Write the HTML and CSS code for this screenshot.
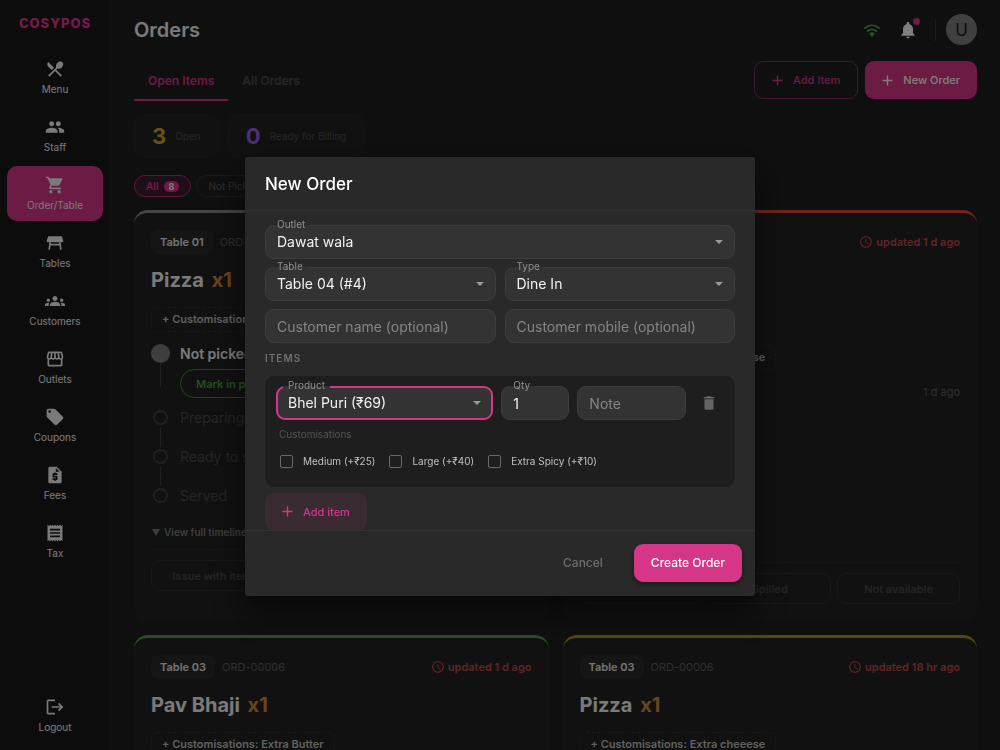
FILE: index.html
```html
<!DOCTYPE html>
<html lang="en">
<head>
<meta charset="utf-8">
<meta name="viewport" content="width=device-width, initial-scale=1">
<title>CosyPOS – Orders</title>
<link rel="stylesheet" href="styles.css">
</head>
<body>
<svg class="sprite" aria-hidden="true">
  <symbol id="i-add" viewBox="0 0 24 24"><path d="M19 13h-6v6h-2v-6H5v-2h6V5h2v6h6v2z"/></symbol>
  <symbol id="i-clock" viewBox="0 0 24 24"><path d="M11.99 2C6.47 2 2 6.48 2 12s4.47 10 9.99 10C17.52 22 22 17.52 22 12S17.52 2 11.99 2zM12 20c-4.42 0-8-3.58-8-8s3.58-8 8-8 8 3.58 8 8-3.58 8-8 8zm.5-13H11v6l5.25 3.15.75-1.23-4.5-2.67z"/></symbol>
</svg>

<div class="app">
  <aside class="sidebar">
    <div class="brand">COSYPOS</div>
    <nav class="nav">
      <a class="nav-item" href="#menu"><svg class="icon" viewBox="0 0 24 24"><path d="M8.1 13.34l2.83-2.83L3.91 3.5c-1.56 1.56-1.56 4.09 0 5.66l4.19 4.18zm6.78-1.81c1.53.71 3.68.21 5.27-1.38 1.91-1.91 2.28-4.65.81-6.12-1.46-1.46-4.2-1.1-6.12.81-1.59 1.59-2.09 3.74-1.38 5.27L3.7 19.87l1.41 1.41L12 14.41l6.88 6.88 1.41-1.41L13.41 13l1.47-1.47z"/></svg>Menu</a>
      <a class="nav-item" href="#staff"><svg class="icon" viewBox="0 0 24 24"><path d="M16 11c1.66 0 2.99-1.34 2.99-3S17.66 5 16 5c-1.66 0-3 1.34-3 3s1.34 3 3 3zm-8 0c1.66 0 2.99-1.34 2.99-3S9.66 5 8 5C6.34 5 5 6.34 5 8s1.34 3 3 3zm0 2c-2.33 0-7 1.17-7 3.5V19h14v-2.5c0-2.33-4.67-3.5-7-3.5zm8 0c-.29 0-.62.02-.97.05 1.16.84 1.97 1.97 1.97 3.45V19h6v-2.5c0-2.33-4.67-3.5-7-3.5z"/></svg>Staff</a>
      <a class="nav-item active" href="#orders"><svg class="icon" viewBox="0 0 24 24"><path d="M7 18c-1.1 0-1.99.9-1.99 2S5.9 22 7 22s2-.9 2-2-.9-2-2-2zM1 2v2h2l3.6 7.59-1.35 2.45c-.16.28-.25.61-.25.96 0 1.1.9 2 2 2h12v-2H7.42c-.14 0-.25-.11-.25-.25l.03-.12.9-1.63h7.45c.75 0 1.41-.41 1.75-1.03l3.58-6.49c.08-.14.12-.31.12-.48 0-.55-.45-1-1-1H5.21l-.94-2H1zm16 16c-1.1 0-1.99.9-1.99 2s.89 2 1.99 2 2-.9 2-2-.9-2-2-2z"/></svg>Order/Table</a>
      <a class="nav-item" href="#tables"><svg class="icon" viewBox="0 0 24 24"><path d="m21.96 9.73-1.43-5c-.12-.43-.51-.73-.96-.73H4.43c-.45 0-.84.3-.96.73l-1.43 5c-.18.63.3 1.27.96 1.27h2.2L4 20h2l.67-5h10.67l.66 5h2l-1.2-9H21c.66 0 1.14-.64.96-1.27zM6.93 13l.27-2h9.6l.27 2H6.93z"/></svg>Tables</a>
      <a class="nav-item" href="#customers"><svg class="icon" viewBox="0 0 24 24"><path d="M12 12.75c1.63 0 3.07.39 4.24.9 1.08.48 1.76 1.56 1.76 2.73V18H6v-1.61c0-1.18.68-2.26 1.76-2.73 1.17-.52 2.61-.91 4.24-.91zM4 13c1.1 0 2-.9 2-2s-.9-2-2-2-2 .9-2 2 .9 2 2 2zm1.13 1.1c-.37-.06-.74-.1-1.13-.1-.99 0-1.93.21-2.78.58C.48 14.9 0 15.62 0 16.43V18h4.5v-1.61c0-.83.23-1.61.63-2.29zM20 13c1.1 0 2-.9 2-2s-.9-2-2-2-2 .9-2 2 .9 2 2 2zm4 3.43c0-.81-.48-1.53-1.22-1.85-.85-.37-1.79-.58-2.78-.58-.39 0-.76.04-1.13.1.4.68.63 1.46.63 2.29V18H24v-1.57zM12 6c1.66 0 3 1.34 3 3s-1.34 3-3 3-3-1.34-3-3 1.34-3 3-3z"/></svg>Customers</a>
      <a class="nav-item" href="#outlets"><svg class="icon" viewBox="0 0 24 24"><path d="M21.9 8.89l-1.05-4.37c-.22-.9-1-1.52-1.91-1.52H5.05c-.9 0-1.69.63-1.9 1.52L2.1 8.89c-.24 1.02-.02 2.06.62 2.88.08.11.19.19.28.29V19c0 1.1.9 2 2 2h14c1.1 0 2-.9 2-2v-6.94c.09-.09.2-.18.28-.28.64-.82.87-1.87.62-2.89zM18.91 4.99l1.05 4.37c.1.42.01.84-.25 1.17-.14.18-.44.47-.94.47-.61 0-1.14-.49-1.21-1.14L16.98 5l1.93-.01zM13 5h1.96l.54 4.52c.05.39-.07.78-.33 1.07-.22.26-.54.41-.95.41-.67 0-1.22-.59-1.22-1.31V5zM8.49 9.52L9.04 5H11v4.69c0 .72-.55 1.31-1.29 1.31-.34 0-.65-.15-.89-.41-.25-.29-.37-.68-.33-1.07zM4.04 9.36L5.05 5h1.97l-.58 4.86c-.08.65-.6 1.14-1.21 1.14-.49 0-.8-.29-.93-.47-.27-.32-.36-.75-.26-1.17zM5 19v-6.03c.08.01.15.03.23.03.87 0 1.66-.36 2.24-.95.6.6 1.4.95 2.31.95.87 0 1.65-.36 2.23-.93.59.57 1.39.93 2.29.93.84 0 1.64-.35 2.24-.95.58.59 1.37.95 2.24.95.08 0 .15-.02.23-.03V19H5z"/></svg>Outlets</a>
      <a class="nav-item" href="#coupons"><svg class="icon" viewBox="0 0 24 24"><path d="M21.41 11.58l-9-9C12.05 2.22 11.55 2 11 2H4c-1.1 0-2 .9-2 2v7c0 .55.22 1.05.59 1.42l9 9c.36.36.86.58 1.41.58.55 0 1.05-.22 1.41-.59l7-7c.37-.36.59-.86.59-1.41 0-.55-.23-1.06-.59-1.42zM5.5 7C4.67 7 4 6.33 4 5.5S4.67 4 5.5 4 7 4.67 7 5.5 6.33 7 5.5 7z"/></svg>Coupons</a>
      <a class="nav-item" href="#fees"><svg class="icon" viewBox="0 0 24 24"><path d="M14 2H6c-1.1 0-1.99.9-1.99 2L4 20c0 1.1.89 2 1.99 2H18c1.1 0 2-.9 2-2V8l-6-6zm1 10h-4v1h3c.55 0 1 .45 1 1v3c0 .55-.45 1-1 1h-1v1h-2v-1H9v-2h4v-1h-3c-.55 0-1-.45-1-1v-3c0-.55.45-1 1-1h1V9h2v1h2v2zm-2-4V3.5L17.5 8H13z"/></svg>Fees</a>
      <a class="nav-item" href="#tax"><svg class="icon" viewBox="0 0 24 24"><path d="M18 17H6v-2h12v2zm0-4H6v-2h12v2zm0-4H6V7h12v2zM3 22l1.5-1.5L6 22l1.5-1.5L9 22l1.5-1.5L12 22l1.5-1.5L15 22l1.5-1.5L18 22l1.5-1.5L21 22V2l-1.5 1.5L18 2l-1.5 1.5L15 2l-1.5 1.5L12 2l-1.5 1.5L9 2 7.5 3.5 6 2 4.5 3.5 3 2v20z"/></svg>Tax</a>
      <a class="nav-item logout" href="#logout"><svg class="icon" viewBox="0 0 24 24"><path d="M17 7l-1.41 1.41L18.17 11H8v2h10.17l-2.58 2.58L17 17l5-5zM4 5h8V3H4c-1.1 0-2 .9-2 2v14c0 1.1.9 2 2 2h8v-2H4V5z"/></svg>Logout</a>
    </nav>
  </aside>

  <main class="main">
    <header class="topbar">
      <h1 class="page-title">Orders</h1>
      <svg class="wifi" viewBox="0 0 24 24" aria-label="Online"><path d="M2.500 9.500a14 14 0 0 1 19 0M6 13.500a9 9 0 0 1 12 0M9.500 17a4 4 0 0 1 5 0"/><circle cx="12" cy="18.500" r="2"/></svg>
      <button class="bell" type="button" aria-label="Notifications"><svg class="icon" viewBox="0 0 24 24"><path d="M12 22c1.1 0 2-.9 2-2h-4c0 1.1.89 2 2 2zm6-6v-5c0-3.070-1.640-5.640-4.500-6.320V4c0-.83-.67-1.500-1.500-1.500s-1.500.67-1.500 1.500v.68C7.630 5.360 6 7.920 6 11v5l-2 2v1h16v-1l-2-2z"/></svg><span class="bell-dot"></span></button>
      <span class="divider"></span>
      <button class="avatar" type="button">U</button>
    </header>

    <div class="toolbar">
      <div class="tabs">
        <button class="tab selected" type="button">Open Items</button>
        <button class="tab" type="button">All Orders</button>
      </div>
      <div class="actions">
        <button class="btn small outline" type="button"><svg class="icon" viewBox="0 0 24 24"><use href="#i-add"/></svg>Add Item</button>
        <button class="btn small primary" type="button"><svg class="icon" viewBox="0 0 24 24"><use href="#i-add"/></svg>New Order</button>
      </div>
    </div>

    <div class="stats">
      <div class="stat"><strong class="stat-num open">3</strong>Open</div>
      <div class="stat"><strong class="stat-num billing">0</strong>Ready for Billing</div>
    </div>

    <div class="filters">
      <button class="filter on" type="button">All <span class="count">8</span></button>
      <button class="filter" type="button">Not Picked</button>
    </div>

    <section class="cards">
      <article class="card grey">
        <div class="card-head"><span class="badge">Table 01</span><span class="ord">ORD-00008</span></div>
        <h2 class="dish">Pizza <span class="times">x1</span></h2>
        <div class="customs"><span class="custom">+ Customisations: Extra cheeese</span></div>
        <ol class="steps">
          <li class="step current"><span class="dot"></span><div class="step-body">Not picked<button class="mark" type="button">Mark in progress</button></div></li>
          <li class="step"><span class="dot"></span><div class="step-body">Preparing</div></li>
          <li class="step"><span class="dot"></span><div class="step-body">Ready to serve</div></li>
          <li class="step"><span class="dot"></span><div class="step-body">Served</div></li>
        </ol>
        <button class="timeline" type="button"><span class="tri"></span>View full timeline</button>
        <div class="issues"><button class="issue" type="button">Issue with item</button><button class="issue" type="button">Spilled</button><button class="issue" type="button">Not available</button></div>
      </article>

      <article class="card red">
        <div class="card-head"><span class="badge">Table 03</span><span class="updated"><svg class="icon" viewBox="0 0 24 24"><use href="#i-clock"/></svg>updated 1 d ago</span></div>
        <h2 class="dish">Pizza <span class="times">x1</span></h2>
        <div class="customs tall"><span class="custom">+ Customisations: Extra cheeese</span></div>
        <ol class="steps">
          <li class="step current"><span class="dot"></span><div class="step-body">Not picked</div><time class="ago">1 d ago</time></li>
          <li class="step"><span class="dot"></span><div class="step-body">Preparing</div></li>
          <li class="step"><span class="dot"></span><div class="step-body">Ready to serve</div></li>
          <li class="step"><span class="dot"></span><div class="step-body">Served</div></li>
        </ol>
        <button class="timeline" type="button"><span class="tri"></span>View full timeline</button>
        <div class="issues"><button class="issue" type="button">Issue with item</button><button class="issue" type="button">Spilled</button><button class="issue" type="button">Not available</button></div>
      </article>

      <article class="card green">
        <div class="card-head"><span class="badge">Table 03</span><span class="ord">ORD-00006</span><span class="updated"><svg class="icon" viewBox="0 0 24 24"><use href="#i-clock"/></svg>updated 1 d ago</span></div>
        <h2 class="dish">Pav Bhaji <span class="times">x1</span></h2>
        <div class="customs"><span class="custom">+ Customisations: Extra Butter</span></div>
      </article>

      <article class="card yellow">
        <div class="card-head"><span class="badge">Table 03</span><span class="ord">ORD-00006</span><span class="updated"><svg class="icon" viewBox="0 0 24 24"><use href="#i-clock"/></svg>updated 18 hr ago</span></div>
        <h2 class="dish">Pizza <span class="times">x1</span></h2>
        <div class="customs"><span class="custom">+ Customisations: Extra cheeese</span></div>
      </article>
    </section>
  </main>
</div>

<div class="backdrop">
  <form class="modal" role="dialog" aria-labelledby="dlg-title">
    <h2 class="modal-title" id="dlg-title">New Order</h2>
    <div class="modal-body">
      <div class="field select"><label for="outlet">Outlet</label><select id="outlet"><option>Dawat wala</option></select></div>
      <div class="pair">
        <div class="field select"><label for="table">Table</label><select id="table"><option>Table 04 (#4)</option></select></div>
        <div class="field select"><label for="type">Type</label><select id="type"><option>Dine In</option></select></div>
      </div>
      <div class="pair">
        <div class="field"><input type="text" aria-label="Customer name" placeholder="Customer name (optional)"></div>
        <div class="field"><input type="tel" aria-label="Customer mobile" placeholder="Customer mobile (optional)"></div>
      </div>
      <h3 class="items-title">ITEMS</h3>
      <div class="item-panel">
        <div class="item-row">
          <div class="field select focused"><label for="product">Product</label><select id="product"><option>Bhel Puri (₹69)</option></select></div>
          <div class="field"><label for="qty">Qty</label><input id="qty" type="text" inputmode="numeric" value="1"></div>
          <div class="field"><input type="text" aria-label="Note" placeholder="Note"></div>
          <button class="trash" type="button" aria-label="Remove item"><svg class="icon" viewBox="0 0 24 24"><path d="M6 19c0 1.1.9 2 2 2h8c1.1 0 2-.9 2-2V7H6v12zM19 4h-3.500l-1-1h-5l-1 1H5v2h14V4z"/></svg></button>
        </div>
        <div class="custom-title">Customisations</div>
        <div class="checks">
          <label class="check"><input type="checkbox">Medium (+₹25)</label>
          <label class="check"><input type="checkbox">Large (+₹40)</label>
          <label class="check"><input type="checkbox">Extra Spicy (+₹10)</label>
        </div>
      </div>
      <button class="btn small tint" type="button"><svg class="icon" viewBox="0 0 24 24"><use href="#i-add"/></svg>Add item</button>
    </div>
    <div class="modal-foot">
      <button class="btn text" type="button">Cancel</button>
      <button class="btn primary raised" type="submit">Create Order</button>
    </div>
  </form>
</div>
</body>
</html>
```
FILE: styles.css
```css
:root {
  --pink: #d63688;
  --bg: #1f1f1f;
  --panel: #222;
}
* { box-sizing: border-box; }
body {
  margin: 0;
  background: var(--bg);
  color: #fff;
  font-family: Inter, "Liberation Sans", sans-serif;
  font-size: 12px;
  line-height: 16px;
  overflow: hidden;
}
button, input, select { font: inherit; color: inherit; margin: 0; }
button { background: none; border: 0; padding: 0; cursor: pointer; white-space: nowrap; }
h1, h2, h3, ol { margin: 0; padding: 0; }
.sprite { display: none; }
.icon { display: block; flex: none; width: 20px; height: 20px; fill: currentColor; }

.app { display: flex; height: 100vh; overflow: hidden; }

/* Sidebar */
.sidebar {
  flex: none;
  width: 110px;
  display: flex;
  flex-direction: column;
  padding: 15px 7px 7px;
  background: #191919;
}
.brand {
  height: 35px;
  text-align: center;
  color: #e83892;
  font-size: 13px;
  font-weight: 800;
  letter-spacing: 1px;
}
.nav { flex: 1; display: flex; flex-direction: column; gap: 3px; }
.nav-item {
  height: 55px;
  display: flex;
  flex-direction: column;
  align-items: center;
  justify-content: center;
  gap: 2px;
  border-radius: 10px;
  color: #f4f4f4;
  font-size: 10px;
  text-decoration: none;
}
.nav-item.active { background: var(--pink); }
.logout { margin-top: auto; }

/* Main column */
.main { flex: 1; min-width: 0; padding: 14px 23px 0 24px; }
.topbar { display: flex; align-items: center; height: 31px; }
.page-title { flex: 1; font-size: 20px; line-height: 28px; font-weight: 600; color: #f4f4f4; }
.wifi { width: 18px; height: 18px; margin-right: 17px; fill: #4caf50; }
.wifi path { fill: none; stroke: #4caf50; stroke-width: 2; stroke-linecap: round; }
.bell { position: relative; margin-right: 17px; }
.bell-dot { position: absolute; top: -2px; right: -2px; width: 7px; height: 7px; border-radius: 50%; background: var(--pink); }
.divider { width: 1px; height: 22px; background: #383838; margin-right: 10px; }
.avatar { width: 31px; height: 31px; border-radius: 50%; background: #808080; color: #1c1c1c; font-size: 17px; }

.toolbar { display: flex; justify-content: space-between; margin-top: 16px; }
.tabs { display: flex; }
.tab { height: 40px; padding: 2px 14px 0; border-bottom: 2px solid transparent; font-weight: 600; color: #4c4c4c; }
.tab.selected { color: var(--pink); border-color: var(--pink); }
.actions { display: flex; gap: 7px; }
.btn {
  display: flex;
  align-items: center;
  justify-content: center;
  gap: 7px;
  height: 38px;
  padding: 0 17px;
  border-radius: 9px;
  font-weight: 500;
}
.btn .icon { width: 17px; height: 17px; margin-left: -3px; }
.btn.small { font-size: 11px; }
.btn.outline { border: 1px solid #8a2c5e; color: var(--pink); }
.btn.primary { background: var(--pink); }
.btn.tint { background: #3a2a32; color: var(--pink); height: 37px; }
.btn.text { color: #6d6d6d; }
.btn.raised { box-shadow: 0 2px 4px #0006; }

.stats { display: flex; gap: 9px; margin-top: 13px; }
.stat {
  display: flex;
  align-items: center;
  gap: 9px;
  height: 44px;
  padding: 0 17px;
  border: 1px solid #262626;
  border-radius: 10px;
  background: var(--panel);
  color: #4e4e4e;
  font-size: 10px;
}
.stat-num { font-size: 22px; font-weight: 700; }
.stat-num.open { color: #c8a830; }
.stat-num.billing { color: #9a60ee; }

.filters { display: flex; gap: 5px; margin-top: 17px; }
.filter {
  display: flex;
  align-items: center;
  gap: 5px;
  height: 22px;
  padding: 0 11px;
  border: 1px solid #303030;
  border-radius: 11px;
  color: #5a5a5a;
  font-size: 10px;
}
.filter.on { border-color: #b02e72; background: #3c1c2e; color: #e83892; font-weight: 600; }
.count { padding: 0 5px; border-radius: 6px; background: var(--pink); color: #fff; font-size: 9px; line-height: 11px; font-weight: 700; }

/* Order cards */
.cards { display: grid; grid-template-columns: 1fr 1fr; gap: 14px; margin-top: 13px; }
.card {
  min-width: 0;
  padding: 17px;
  border: 0 solid transparent;
  border-top-width: 3px;
  border-radius: 14px;
  background: var(--panel);
}
.card.grey { border-top-color: #8c8c8c; }
.card.red { border-top-color: #e8453c; }
.card.green { border-top-color: #4f9e46; }
.card.yellow { border-top-color: #a89020; }
.card-head { display: flex; align-items: center; gap: 7px; height: 24px; }
.badge { padding: 4px 9px; border-radius: 7px; background: #2a2a2a; color: #e8e8e8; font-size: 11px; font-weight: 600; }
.ord { color: #5e5e5e; font-size: 11px; }
.updated { display: flex; align-items: center; gap: 3px; margin-left: auto; color: #c04a46; font-size: 11px; font-weight: 600; }
.updated .icon { width: 14px; height: 14px; }
.dish { margin-top: 12px; font-size: 20px; line-height: 28px; font-weight: 700; color: #f4f4f4; }
.times { margin-left: 3px; color: #d08a38; }
.customs { display: flex; align-items: flex-end; margin-top: 13px; }
.customs.tall { height: 63px; }
.custom {
  height: 25px;
  padding: 4px 10px;
  border: 1px dashed #333;
  border-radius: 7px;
  color: #c0c0c0;
  font-size: 11px;
  line-height: 15px;
  font-weight: 600;
}
.steps { margin-top: 12px; list-style: none; }
.step { position: relative; display: flex; gap: 10px; min-height: 39px; color: #4a4a4a; font-size: 14px; line-height: 20px; }
.step:not(:last-child)::after { content: ""; position: absolute; left: 9px; top: 19px; bottom: 0; width: 1px; background: #404040; }
.step.current::after { bottom: auto; height: 24px; }
.step.current { color: #f4f4f4; font-weight: 600; }
.step:last-child { min-height: 27px; }
.dot { flex: none; width: 15px; height: 15px; margin: 2px; border: 2px solid #404040; border-radius: 50%; }
.current .dot { width: 19px; height: 19px; margin: 0; border: 0; background: #7c7c7c; }
.mark {
  display: block;
  height: 29px;
  margin: 5px 0 10px;
  padding: 0 15px;
  border: 1px solid #3f8f3a;
  border-radius: 15px;
  color: #4a9e44;
  font-size: 11px;
  font-weight: 600;
}
.ago { margin-left: auto; color: #5e5e5e; font-size: 11px; font-weight: 400; }
.timeline { display: flex; align-items: center; gap: 4px; margin-top: 11px; color: #7c7c7c; font-size: 10px; font-weight: 600; padding-left: 1px; }
.tri { border: 4px solid transparent; border-top: 7px solid #7c7c7c; border-bottom: 0; }
.issues { display: flex; gap: 6px; margin-top: 9px; padding-top: 10px; border-top: 1px solid #2b2b2b; }
.issue { flex: 1 1 0; height: 31px; border: 1px solid #313131; border-radius: 9px; color: #484848; font-size: 11px; font-weight: 600; }

/* Dialog */
.backdrop {
  position: fixed;
  inset: 0;
  display: flex;
  align-items: center;
  justify-content: center;
  padding: 23px 20px 20px;
  background: rgba(0, 0, 0, .5);
}
.modal {
  width: 100%;
  max-width: 510px;
  border-radius: 3px;
  background: #292929;
  box-shadow: 0 9px 12px -6px #0005, 0 20px 32px 2px #0004, 0 8px 38px 6px #0003;
}
.modal-title { padding: 15px 20px 14px; border-bottom: 1px solid #303030; font-size: 17px; line-height: 24px; font-weight: 500; }
.modal-body { display: flex; flex-direction: column; gap: 8px; padding: 14px 20px 0; }
.pair { display: grid; grid-template-columns: 1fr 1fr; gap: 9px; }
.field { position: relative; min-width: 0; }
.field label {
  position: absolute;
  z-index: 1;
  top: -8px;
  left: 7px;
  padding: 0 5px;
  background: linear-gradient(transparent 8px, #333 8px);
  color: #8f8f8f;
  font-size: 10px;
  line-height: 14px;
}
.field select, .field input {
  display: block;
  width: 100%;
  height: 34px;
  padding: 0 11px;
  border: 1px solid #3d3d3d;
  border-radius: 9px;
  background: #333;
  color: #f2f2f2;
  font-size: 14px;
  appearance: none;
  outline: 0;
}
.field input::placeholder { color: #858585; opacity: 1; }
.field.select::after {
  content: "";
  position: absolute;
  right: 12px;
  top: 15px;
  border: 4px solid transparent;
  border-top-color: #9a9a9a;
  border-bottom: 0;
}
.field.focused select { border: 2px solid var(--pink); padding: 0 10px; }
.items-title { font-size: 10px; line-height: 14px; font-weight: 600; letter-spacing: 1px; color: #707070; }
.item-panel { margin-top: 3px; padding: 10px 11px; border-radius: 9px; background: #1e1e1e; }
.item-row { display: grid; grid-template-columns: 4fr 68px 2fr 30px; gap: 8px; }
.trash { display: flex; align-items: center; justify-content: center; color: #666; }
.trash .icon { width: 18px; height: 18px; }
.custom-title { margin-top: 7px; padding-left: 3px; color: #555; font-size: 10px; line-height: 14px; }
.checks { display: flex; gap: 14px; padding-left: 4px; margin-top: 4px; }
.check { display: flex; align-items: center; gap: 10px; height: 32px; color: #c0c0c0; font-size: 10px; }
.check input { appearance: none; width: 13px; height: 13px; margin: 0; border: 1px solid #6a6a6a; border-radius: 2px; }
.modal-body > .btn { align-self: flex-start; margin-top: -2px; }
.modal-foot { display: flex; justify-content: flex-end; gap: 14px; padding: 13px 13px 14px; border-top: 1px solid #323232; }
```
